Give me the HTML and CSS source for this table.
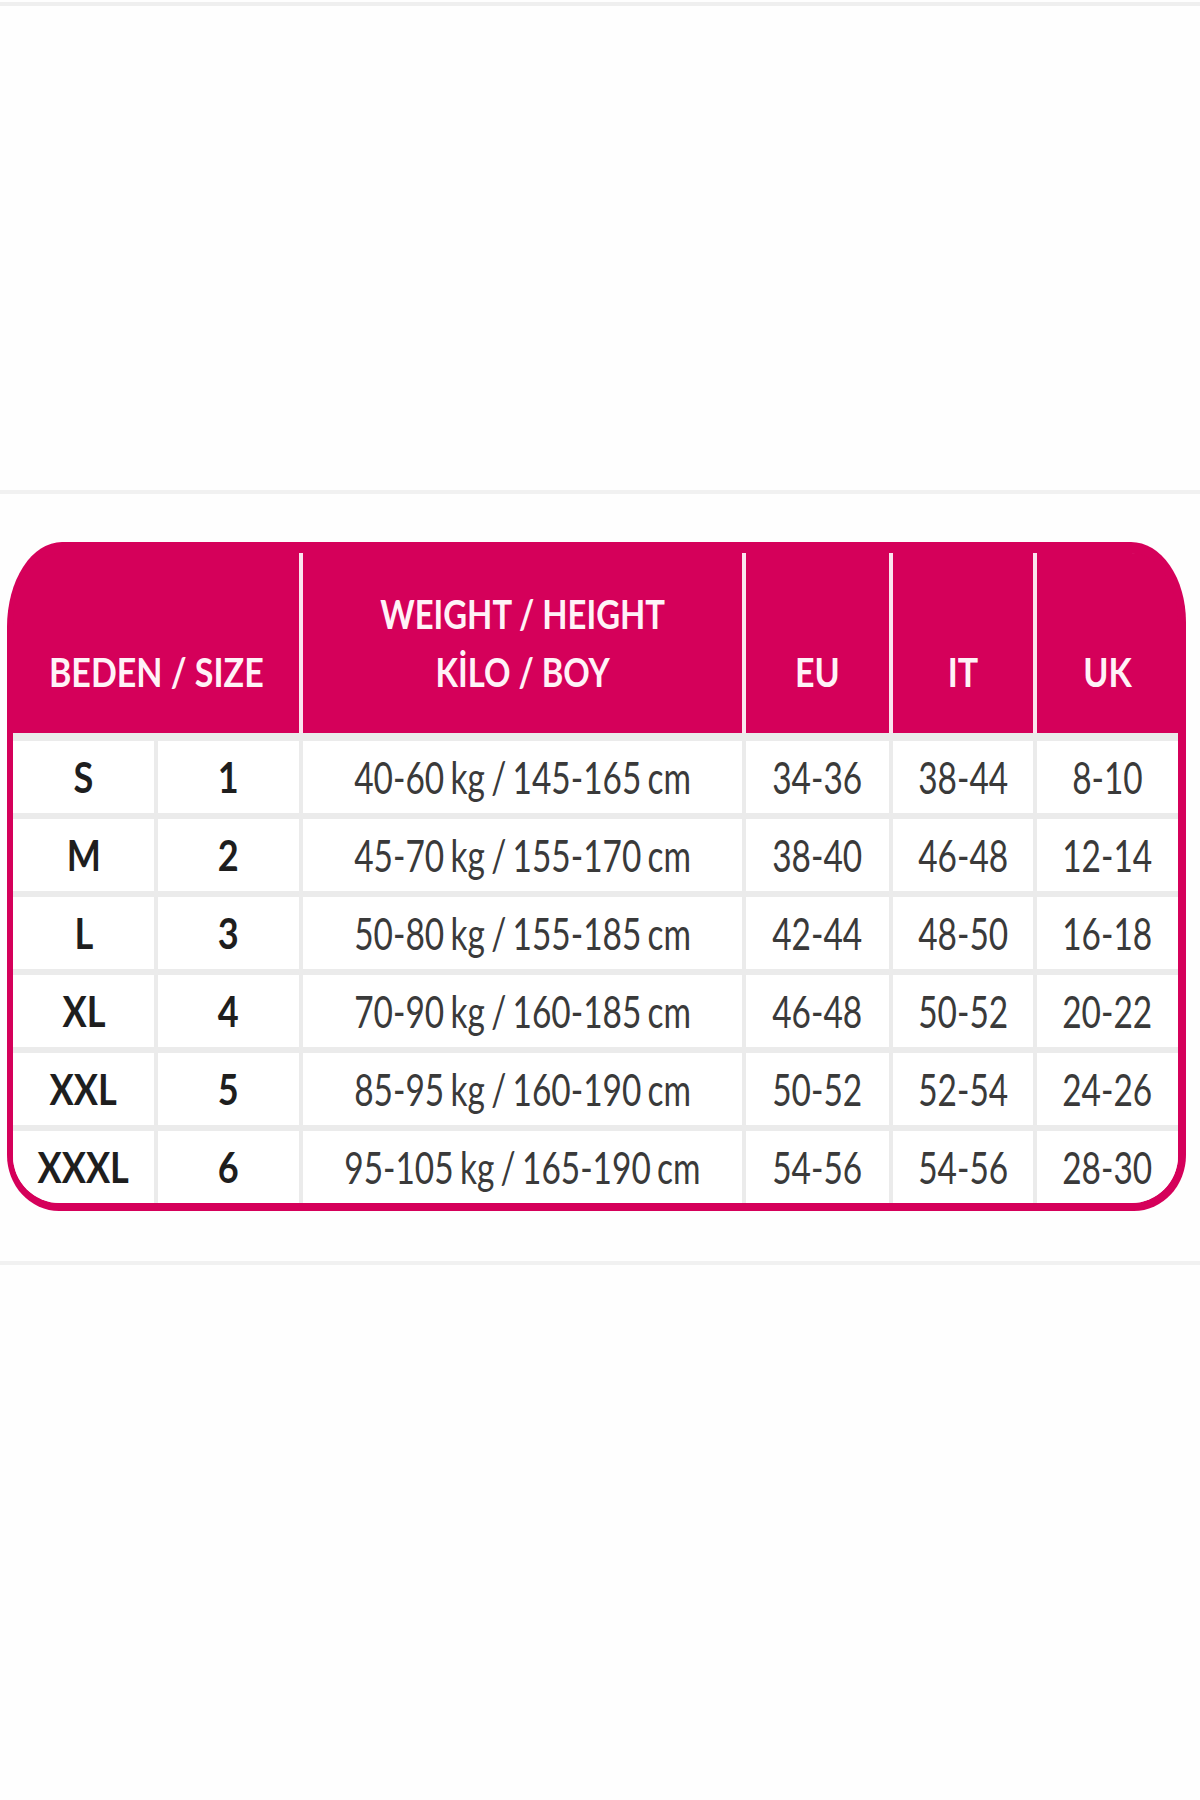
FILE: index.html
```html
<!DOCTYPE html>
<html lang="tr">
<head>
<meta charset="utf-8">
<title>Beden Tablosu</title>
<link rel="stylesheet" href="styles.css">
</head>
<body>
<div class="rule-top"></div>
<div class="gap-top"></div>
<section class="chart">
  <div class="card">
    <div class="head">
      <div class="hcell span2"><span class="t">BEDEN / SIZE</span></div>
      <div class="hcell"><span class="t wide">WEIGHT / HEIGHT<br>KİLO / BOY</span></div>
      <div class="hcell"><span class="t">EU</span></div>
      <div class="hcell"><span class="t">IT</span></div>
      <div class="hcell"><span class="t">UK</span></div>
    </div>
    <div class="body">
      <div class="cell sz"><span class="t">S</span></div>
      <div class="cell sz"><span class="t">1</span></div>
      <div class="cell"><span class="t">40-60 kg / 145-165 cm</span></div>
      <div class="cell"><span class="t">34-36</span></div>
      <div class="cell"><span class="t">38-44</span></div>
      <div class="cell"><span class="t">8-10</span></div>

      <div class="cell sz"><span class="t">M</span></div>
      <div class="cell sz"><span class="t">2</span></div>
      <div class="cell"><span class="t">45-70 kg / 155-170 cm</span></div>
      <div class="cell"><span class="t">38-40</span></div>
      <div class="cell"><span class="t">46-48</span></div>
      <div class="cell"><span class="t">12-14</span></div>

      <div class="cell sz"><span class="t">L</span></div>
      <div class="cell sz"><span class="t">3</span></div>
      <div class="cell"><span class="t">50-80 kg / 155-185 cm</span></div>
      <div class="cell"><span class="t">42-44</span></div>
      <div class="cell"><span class="t">48-50</span></div>
      <div class="cell"><span class="t">16-18</span></div>

      <div class="cell sz"><span class="t">XL</span></div>
      <div class="cell sz"><span class="t">4</span></div>
      <div class="cell"><span class="t">70-90 kg / 160-185 cm</span></div>
      <div class="cell"><span class="t">46-48</span></div>
      <div class="cell"><span class="t">50-52</span></div>
      <div class="cell"><span class="t">20-22</span></div>

      <div class="cell sz"><span class="t">XXL</span></div>
      <div class="cell sz"><span class="t">5</span></div>
      <div class="cell"><span class="t">85-95 kg / 160-190 cm</span></div>
      <div class="cell"><span class="t">50-52</span></div>
      <div class="cell"><span class="t">52-54</span></div>
      <div class="cell"><span class="t">24-26</span></div>

      <div class="cell sz"><span class="t">XXXL</span></div>
      <div class="cell sz"><span class="t">6</span></div>
      <div class="cell"><span class="t">95-105 kg / 165-190 cm</span></div>
      <div class="cell"><span class="t">54-56</span></div>
      <div class="cell"><span class="t">54-56</span></div>
      <div class="cell"><span class="t">28-30</span></div>
    </div>
  </div>
</section>
</body>
</html>
```
FILE: styles.css
```css
html, body {
  margin: 0;
  padding: 0;
  background: #fefefe;
}

body {
  width: 1200px;
  height: 1800px;
  font-family: Lato, "Open Sans", "Liberation Sans", sans-serif;
}

.rule-top {
  margin-top: 2px;
  height: 4px;
  background: #efefef;
}

.gap-top {
  height: 484px;
}

.chart {
  border-top: 4px solid #f1f1f1;
  border-bottom: 4px solid #f1f1f1;
  padding: 48px 14px 50px 7px;
}

.card {
  background: #d5005a;
  border-radius: 55px 55px 52px 52px / 85px 80px 56px 56px;
  padding: 11px 8px 8px 6px;
}

.head,
.body {
  display: grid;
  grid-template-columns: 141px 141px 439px 143px 140px 1fr;
  column-gap: 4px;
}

.head {
  height: 180px;
}

.hcell {
  background: #d5005a;
  display: flex;
  align-items: flex-end;
  justify-content: center;
  padding-bottom: 32px;
  color: #fff2f7;
  font-weight: 700;
  font-size: 40px;
  line-height: 58px;
  text-align: center;
}

.hcell + .hcell {
  box-shadow: -4px 0 0 #fbe4ee;
}

.hcell:first-child {
  border-top-left-radius: 49px 74px;
}

.hcell:last-child {
  border-top-right-radius: 47px 69px;
}

.span2 {
  grid-column: span 2;
}

.t {
  display: inline-block;
  transform: scaleX(0.8);
  white-space: nowrap;
}

.hcell .t {
  transform: scaleX(0.85);
}

.hcell .t.wide {
  transform: scaleX(0.82);
}

.body {
  row-gap: 6px;
  grid-auto-rows: 72px;
  padding-top: 8px;
  background: #ebebeb;
  border-radius: 0 0 47px 47px;
  overflow: hidden;
}

.cell {
  background: #ffffff;
  display: flex;
  align-items: center;
  justify-content: center;
  font-size: 44px;
  color: #3a3a3a;
}

.cell .t {
  transform: scaleX(0.76);
  word-spacing: -3px;
}

.cell.sz {
  font-weight: 700;
  font-size: 42px;
  color: #1e1e1e;
}

.cell.sz .t {
  transform: scaleX(0.86);
}
```
